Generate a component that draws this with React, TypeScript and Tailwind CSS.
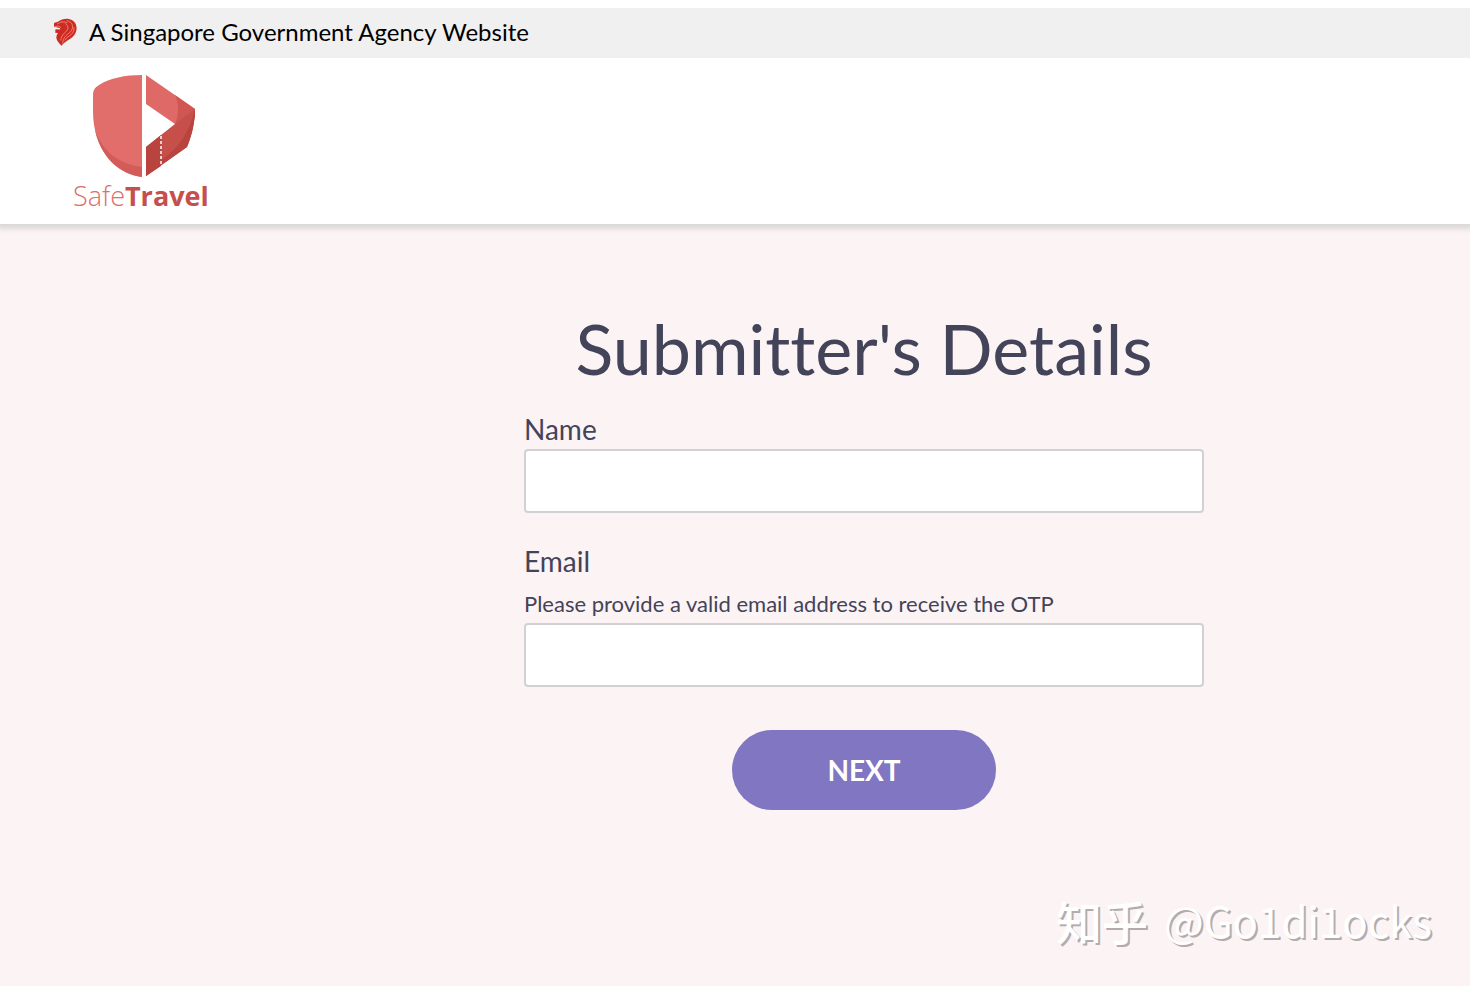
import { useId, useState } from "react";
import type { FormEvent } from "react";

const LionIcon = () => (
  <svg
    viewBox="0 0 24 28"
    className="h-7 w-6 shrink-0"
    fill="none"
    aria-hidden="true"
  >
    <path
      d="M1 5.200C2.600 4.400 4 4.300 5.200 3.600 8 1.400 12 .2 16 .9c3 .7 5.500 2.400 6.700 5 1.500 3.800 1 7.600-1.200 10.900-1.900 2.700-4.400 4-6.600 5.500-2.600 1.700-4.400 3.200-6.400 5.400-1.900-1.900-4.200-4.200-5-7-.4-2.300.3-4 1.600-5.900L5 15l-2.900-.3.4-1.800-.7-.9 2-.7 3.400.1-.5-1.300L1 8.800Z"
      fill="#cf2a22"
    />
    <path
      d="M4.500 5.700c2.600-1.500 6.500-2.700 9.500-.9M14 2.700c4.500.8 6.400 4.500 5.200 8.300-1 3.500-4.900 4.800-6.900 7.400-1.500 2-2.300 4-2.700 6.500M12.500 5.700c3.200 2 3 5 .9 7.400-2.300 2.500-5.200 4.300-5.700 9M21 9.500c.4 4-1.700 6.400-4.300 8.200-2 1.300-3.700 2.600-4.700 4.400M2 8.500l3.500-.4 2 1.200"
      stroke="#f3a697"
      strokeWidth=".7"
      strokeLinecap="round"
    />
  </svg>
);

const ShieldIcon = () => (
  <svg viewBox="0 0 104 104" className="ml-5 size-[104px]" aria-hidden="true">
    <path
      d="M49 1C32 1 17 4 6 11c-5 3-6 6-6 11v15c0 38 21 62 49 66Z"
      fill="#e26e6b"
    />
    <path d="M2 56c8 22 24 34 47 37v10C25 100 8 82 2 56Z" fill="#d35c59" />
    <path d="M53 1l49 34v9L82 50 53 30Z" fill="#df6966" />
    <path d="M82 21l20 14v7L82 50c4-9 4-20 0-29Z" fill="#d05653" />
    <path d="M102 35c0 13-3 26-8 38l-41 29V73l29-23Z" fill="#c64f4a" />
    <path d="M102 35c0 13-3 26-8 38l-41 29v-8c23-9 42-28 49-59Z" fill="#b9443f" />
    <path d="M53 73l15-12v31l-15 10Z" fill="#b9443f" />
    <path d="M68 62v30" stroke="#fff" strokeWidth="1.500" strokeDasharray="3 2" />
  </svg>
);

const Logo = () => (
  <a
    href="#"
    aria-label="SafeTravel"
    className="flex w-fit flex-col items-start font-['Open_Sans',sans-serif] text-[27px] leading-8 text-[#d9706d]"
  >
    <ShieldIcon />
    <span className="mt-0.5 font-light">
      Safe<span className="font-bold text-[#c44f4c]">Travel</span>
    </span>
  </a>
);

type FieldProps = {
  label: string;
  type: string;
  value: string;
  hint?: string;
  onChange: (value: string) => void;
};

const Field = ({ label, type, value, hint, onChange }: FieldProps) => {
  const id = useId();

  return (
    <div className="flex flex-col">
      <label htmlFor={id} className="text-[28px] leading-10">
        {label}
      </label>
      {hint && (
        <p id={`${id}-hint`} className="mt-1 text-[22px] leading-[38px]">
          {hint}
        </p>
      )}
      <input
        id={id}
        type={type}
        value={value}
        aria-describedby={hint ? `${id}-hint` : undefined}
        onChange={(e) => onChange(e.target.value)}
        className="h-16 w-full rounded border-2 border-[#d0d0d5] bg-white px-4 text-[28px] outline-none focus:border-[#8076c2]"
      />
    </div>
  );
};

const App = () => {
  const [name, setName] = useState("");
  const [email, setEmail] = useState("");

  const handleSubmit = (e: FormEvent) => {
    e.preventDefault();
  };

  return (
    <div className="flex min-h-screen flex-col overflow-x-hidden bg-[#fcf3f4] font-['Lato',sans-serif] text-[#434359]">
      <header className="bg-white pt-2 shadow-[0_2px_5px_3px_#dad9d8]">
        <div className="flex h-[50px] items-center gap-3 bg-[#f0f0f0] px-[53px] pb-0.5 text-2xl text-black">
          <LionIcon />
          <span>A Singapore Government Agency Website</span>
        </div>
        <div className="px-[73px] pt-4 pb-3">
          <Logo />
        </div>
      </header>

      <main className="flex flex-1 justify-center pt-20 pl-[258px]">
        <form onSubmit={handleSubmit} className="flex w-full max-w-[680px] flex-col">
          <h1 className="text-center text-[70px] leading-[88px] [font-variant-ligatures:none]">
            Submitter's Details
          </h1>
          <div className="mt-[17px] flex flex-col gap-7">
            <Field label="Name" type="text" value={name} onChange={setName} />
            <Field
              label="Email"
              type="email"
              value={email}
              hint="Please provide a valid email address to receive the OTP"
              onChange={setEmail}
            />
          </div>
          <button
            type="submit"
            className="mt-[43px] h-20 w-[264px] self-center rounded-full bg-[#8076c2] text-[28px] font-bold text-white"
          >
            NEXT
          </button>
        </form>
      </main>

      <footer className="flex justify-end px-[38px] pb-8">
        <p className="flex items-center gap-4 font-['Noto_Sans_CJK_SC',sans-serif] text-[42px] leading-[68px] text-white [text-shadow:2px_2px_0_#b3acac]">
          <span className="text-[46px] font-medium">知乎</span>
          <span>@Go1di1ocks</span>
        </p>
      </footer>
    </div>
  );
};

export default App;
